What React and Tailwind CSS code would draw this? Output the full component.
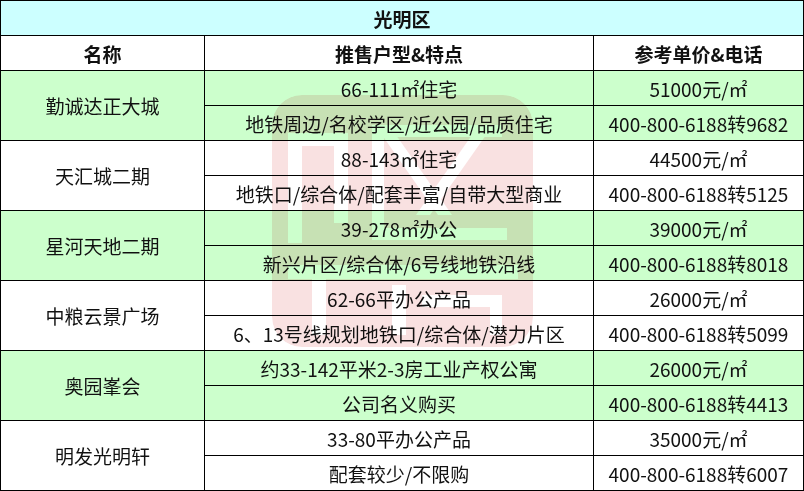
import React from "react";

const groups = [
  {
    name: "勤诚达正大城",
    green: true,
    rows: [
      ["66-111㎡住宅", "51000元/㎡"],
      ["地铁周边/名校学区/近公园/品质住宅", "400-800-6188转9682"],
    ],
  },
  {
    name: "天汇城二期",
    green: false,
    rows: [
      ["88-143㎡住宅", "44500元/㎡"],
      ["地铁口/综合体/配套丰富/自带大型商业", "400-800-6188转5125"],
    ],
  },
  {
    name: "星河天地二期",
    green: true,
    rows: [
      ["39-278㎡办公", "39000元/㎡"],
      ["新兴片区/综合体/6号线地铁沿线", "400-800-6188转8018"],
    ],
  },
  {
    name: "中粮云景广场",
    green: false,
    rows: [
      ["62-66平办公产品", "26000元/㎡"],
      ["6、13号线规划地铁口/综合体/潜力片区", "400-800-6188转5099"],
    ],
  },
  {
    name: "奥园峯会",
    green: true,
    rows: [
      ["约33-142平米2-3房工业产权公寓", "26000元/㎡"],
      ["公司名义购买", "400-800-6188转4413"],
    ],
  },
  {
    name: "明发光明轩",
    green: false,
    rows: [
      ["33-80平办公产品", "35000元/㎡"],
      ["配套较少/不限购", "400-800-6188转6007"],
    ],
  },
];

// faint stamp-like watermark sitting over the middle column
const Watermark = () => (
  <svg
    className="absolute left-[272px] top-[95px] pointer-events-none mix-blend-multiply"
    width="261"
    height="252"
    viewBox="0 0 261 252"
  >
    <defs>
      <mask id="wm">
        <rect x="0" y="0" width="261" height="252" rx="30" fill="white" />
        <rect x="16" y="38" width="14" height="110" fill="black" />
        <rect x="16" y="38" width="60" height="13" fill="black" />
        <rect x="62" y="38" width="14" height="90" fill="black" />
        <path d="M110 40 L124 40 L180 120 L166 120 Z" fill="black" />
        <path d="M200 40 L214 40 L158 120 L144 120 Z" fill="black" />
        <rect x="100" y="30" width="130" height="12" fill="black" />
        <rect x="100" y="30" width="12" height="115" fill="black" />
        <rect x="100" y="133" width="135" height="12" fill="black" />
        <rect x="16" y="170" width="230" height="14" fill="black" />
        <rect x="40" y="170" width="14" height="70" fill="black" />
        <rect x="120" y="190" width="14" height="50" fill="black" />
        <rect x="150" y="200" width="80" height="12" fill="black" />
        <rect x="218" y="200" width="12" height="40" fill="black" />
      </mask>
    </defs>
    <rect
      x="0"
      y="0"
      width="261"
      height="252"
      rx="30"
      fill="#e06a6a"
      fillOpacity="0.2"
      mask="url(#wm)"
    />
  </svg>
);

export default function App() {
  return (
    <div
      className="relative w-[804px] h-[491px] bg-white text-[#111] text-[19px] leading-none"
      style={{ fontFamily: '"Noto Sans CJK SC", "Noto Sans", sans-serif' }}
    >
      <div className="flex flex-col w-[804px] border-l border-t border-black">
        <div className="h-[35px] flex items-center justify-center bg-[#ccffff] border-r border-b border-black font-bold">
          光明区
        </div>
        <div className="flex h-[35px] font-bold">
          <div className="w-[204px] flex items-center justify-center border-r border-b border-black">名称</div>
          <div className="w-[389px] flex items-center justify-center border-r border-b border-black">推售户型&amp;特点</div>
          <div className="w-[210px] flex items-center justify-center border-r border-b border-black">参考单价&amp;电话</div>
        </div>
        {groups.map((g) => (
          <div key={g.name} className={`flex h-[70px] ${g.green ? "bg-[#ccffcc]" : "bg-white"}`}>
            <div className="w-[204px] flex items-center justify-center border-r border-b border-black">
              {g.name}
            </div>
            <div className="w-[599px] flex flex-col">
              {g.rows.map(([a, b]) => (
                <div key={a} className="flex h-[35px]">
                  <div className="w-[389px] flex items-center justify-center border-r border-b border-black whitespace-nowrap">
                    {a}
                  </div>
                  <div className="w-[210px] flex items-center justify-center border-r border-b border-black whitespace-nowrap">
                    {b}
                  </div>
                </div>
              ))}
            </div>
          </div>
        ))}
      </div>
      <Watermark />
    </div>
  );
}
